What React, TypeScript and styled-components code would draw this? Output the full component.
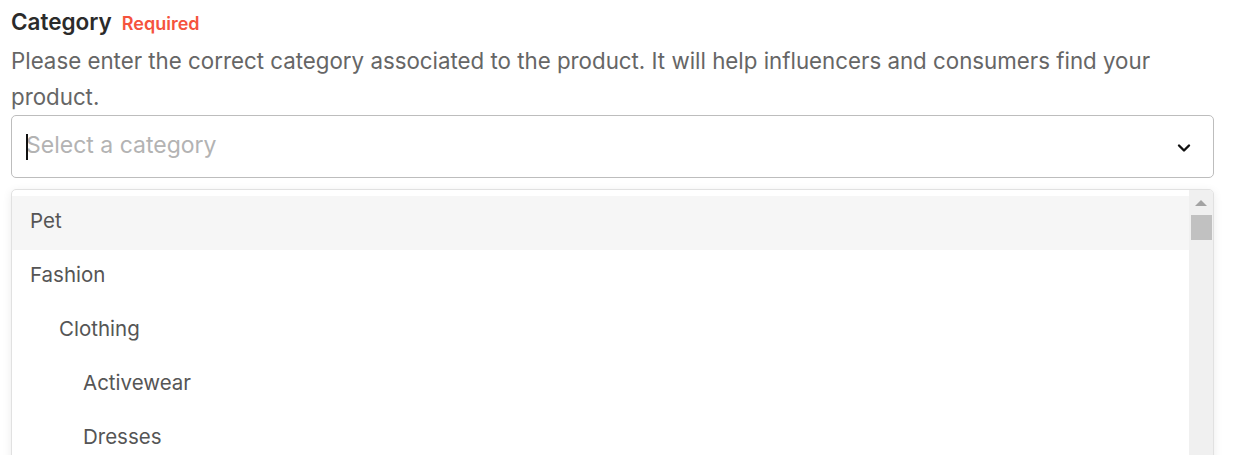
import styled, { createGlobalStyle } from 'styled-components'

const Global = createGlobalStyle`
  html, body {
    margin: 0;
    padding: 0;
    background: #fff;
    overflow: hidden;
  }
  body {
    font-family: Inter, "Noto Sans", sans-serif;
  }
`

const Wrapper = styled.div`
  padding: 7px 20px 0 11px;
  width: 1203px;
`

const TitleRow = styled.div`
  display: flex;
  align-items: baseline;
  gap: 10px;
  height: 30px;
  line-height: 30px;
`

const Title = styled.span`
  font-size: 22.5px;
  font-weight: 600;
  color: #2b2b2b;
`

const Required = styled.span`
  font-size: 18px;
  font-weight: 600;
  color: #f5533d;
`

const Description = styled.p`
  margin: 6px 0 0;
  font-size: 22.3px;
  line-height: 36px;
  color: #666;
`

const Field = styled.div`
  height: 61px;
  border: 1px solid #bdbdbd;
  border-radius: 5px;
  display: flex;
  align-items: center;
  justify-content: space-between;
  padding: 0 22px 0 14px;
`

const Placeholder = styled.span`
  font-size: 23px;
  color: #b3b3b3;
  display: flex;
  align-items: center;
  margin-top: -3px;
`

const Caret = styled.span`
  display: inline-block;
  width: 2px;
  height: 26px;
  background: #111;
  margin-right: -2px;
  margin-top: 4px;
  position: relative;
  z-index: 1;
`

const Chevron = styled.svg`
  width: 14px;
  height: 10px;
  margin-top: 3px;
`

const Menu = styled.div`
  margin-top: 11px;
  border: 1px solid #e1e1e1;
  border-radius: 5px;
  box-shadow: 0 2px 10px rgba(0, 0, 0, 0.08);
  display: flex;
  overflow: hidden;
  height: 300px;
`

const Options = styled.ul`
  list-style: none;
  margin: 0;
  padding: 6px 0 0;
  flex: 1;
`

const Option = styled.li<{ $level: number; $active?: boolean }>`
  height: 54px;
  box-sizing: border-box;
  padding-bottom: 5px;
  display: flex;
  align-items: center;
  padding-left: ${(p) => [18, 47, 71][p.$level]}px;
  font-size: 20.5px;
  color: #555;
  background: ${(p) => (p.$active ? '#f6f6f6' : 'transparent')};
`

const Track = styled.div`
  width: 24px;
  background: #f0f0f0;
  display: flex;
  flex-direction: column;
  align-items: center;
`

const UpArrow = styled.div`
  margin-top: 10px;
  width: 0;
  height: 0;
  border-left: 6px solid transparent;
  border-right: 6px solid transparent;
  border-bottom: 6px solid #a3a3a3;
`

const Thumb = styled.div`
  margin-top: 9px;
  width: 21px;
  height: 25px;
  background: #c1c1c1;
`

const options: { label: string; level: number }[] = [
  { label: 'Pet', level: 0 },
  { label: 'Fashion', level: 0 },
  { label: 'Clothing', level: 1 },
  { label: 'Activewear', level: 2 },
  { label: 'Dresses', level: 2 },
]

export default function App() {
  return (
    <>
      <Global />
      <Wrapper>
        <TitleRow>
          <Title>Category</Title>
          <Required>Required</Required>
        </TitleRow>
        <Description>
          Please enter the correct category associated to the product. It will
          help influencers and consumers find your product.
        </Description>
        <Field>
          <Placeholder>
            <Caret />
            Select a category
          </Placeholder>
          <Chevron viewBox="0 0 14 10">
            <path
              d="M2 2.5 L7 7.5 L12 2.5"
              fill="none"
              stroke="#111"
              strokeWidth="2.4"
              strokeLinecap="round"
              strokeLinejoin="round"
            />
          </Chevron>
        </Field>
        <Menu>
          <Options>
            {options.map((o, i) => (
              <Option key={o.label} $level={o.level} $active={i === 0}>
                {o.label}
              </Option>
            ))}
          </Options>
          <Track>
            <UpArrow />
            <Thumb />
          </Track>
        </Menu>
      </Wrapper>
    </>
  )
}
